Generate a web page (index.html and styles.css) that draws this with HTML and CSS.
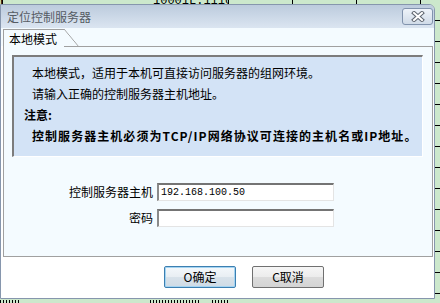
FILE: index.html
```html
<!DOCTYPE html>
<html>
<head>
<meta charset="utf-8">
<link rel="stylesheet" href="styles.css">
</head>
<body>
<div class="desk">
  <div class="toprow">
    <span class="cell c0">Fo</span>
    <span class="cell c1">10001L.1110</span>
    <span class="cell c2"></span>
    <span class="cell c3"></span>
    <span class="cell c4"></span>
  </div>
  <div class="bottomrow">
    <span class="dots d1"></span>
    <span class="dots d2"></span>
    <span class="dots d3"></span>
  </div>

  <div class="dialog">
    <div class="titlebar">
      <span class="title">定位控制服务器</span>
      <button class="close" type="button" aria-label="关闭">
        <svg width="14" height="11" viewBox="0 0 14 11">
          <path d="M3 2 L11 9 M11 2 L3 9" stroke="#5f6670" stroke-width="4" stroke-linecap="square"/>
          <path d="M3 2 L11 9 M11 2 L3 9" stroke="#ffffff" stroke-width="2" stroke-linecap="square"/>
        </svg>
      </button>
    </div>
    <div class="tabstrip">
      <div class="tab">本地模式</div>
    </div>
    <div class="panel">
      <div class="info">
        <p class="line">本地模式，适用于本机可直接访问服务器的组网环境。</p>
        <p class="line">请输入正确的控制服务器主机地址。</p>
        <p class="note">注意:</p>
        <p class="warn">控制服务器主机必须为TCP/IP网络协议可连接的主机名或IP地址。</p>
      </div>
      <div class="form">
        <div class="row">
          <span class="label">控制服务器主机</span>
          <span class="input">192.168.100.50</span>
        </div>
        <div class="row">
          <span class="label">密码</span>
          <span class="input"></span>
        </div>
      </div>
    </div>
    <div class="buttons">
      <button class="btn default" type="button">O确定</button>
      <button class="btn" type="button">C取消</button>
    </div>
  </div>
</div>
</body>
</html>
```

FILE: styles.css
```css
* { box-sizing: border-box; }

html, body {
  margin: 0;
  padding: 0;
}

body {
  width: 440px;
  height: 303px;
  overflow: hidden;
  font-family: "Noto Sans CJK SC", "Liberation Sans", sans-serif;
  font-size: 12px;
  color: #000;
}

.desk {
  position: relative;
  width: 440px;
  height: 303px;
  background-color: #cce8cc;
  background-image: repeating-linear-gradient(to bottom, transparent 0 20px, #000 20px 21px);
  overflow: hidden;
}

.toprow {
  display: flex;
  height: 5px;
  overflow: hidden;
  background: #cce8cc;
}

.cell {
  display: block;
  height: 5px;
  border-right: 1px solid #000;
  font-family: "Liberation Mono", monospace;
  font-size: 12px;
  line-height: 0;
  padding-top: 1px;
  color: #000;
  text-align: center;
  white-space: nowrap;
  overflow: hidden;
}

.c0 { width: 3px; }
.c1 { width: 226px; padding-left: 150px; text-align: left; }
.c2 { width: 64px; }
.c3 { width: 64px; }
.c4 { width: 64px; }

.bottomrow {
  position: absolute;
  left: 0;
  bottom: 0;
  width: 440px;
  height: 4px;
}

.dots {
  position: absolute;
  top: 1px;
  height: 3px;
  background-image: repeating-linear-gradient(to right, #000 0 1px, transparent 1px 3px);
}
.d1 { left: 0; width: 20px; }
.d2 { left: 150px; width: 50px; }
.d3 { left: 212px; width: 18px; }

/* dialog window */
.dialog {
  position: absolute;
  left: 0;
  top: 4px;
  width: 435px;
  height: 295px;
  border: 1px solid #8696ad;
  border-radius: 0 6px 0 0;
  background: #ffffff;
  display: flex;
  flex-direction: column;
  overflow: hidden;
}

.titlebar {
  height: 23px;
  display: flex;
  align-items: center;
  padding-left: 6px;
  padding-right: 1px;
  background: linear-gradient(to bottom, #bccbdd, #dbe5f1);
}

.title {
  color: #555b63;
  font-size: 12px;
  line-height: 14px;
}

.close {
  margin-left: auto;
  width: 31px;
  height: 17px;
  padding: 0;
  border: 1px solid #8193ad;
  border-radius: 3px;
  background: linear-gradient(to bottom, #eef3f9, #d0dbe8);
  display: flex;
  align-items: center;
  justify-content: center;
}

.close svg { display: block; }

.tabstrip {
  height: 18px;
  background: #f4fbff;
  padding-left: 2px;
  display: flex;
  align-items: flex-end;
  position: relative;
  z-index: 1;
}

.tab {
  position: relative;
  width: 61px;
  height: 18px;
  margin-bottom: -1px;
  padding-left: 5px;
  border-top: 1px solid #a0a0a0;
  border-left: 1px solid #a0a0a0;
  background: #f4fbff;
  line-height: 17px;
  font-size: 12px;
}

.tab::after {
  content: "";
  position: absolute;
  left: 60px;
  top: -1px;
  width: 15px;
  height: 18px;
  background: linear-gradient(to top right, transparent calc(50% - 0.7px), #a0a0a0 50%, transparent calc(50% + 0.7px));
}

.panel {
  margin: 0 1px 0 2px;
  height: 211px;
  border: 1px solid #a0a0a0;
  background: #f4fbff;
  padding: 8px 9px 0 8px;
  display: flex;
  flex-direction: column;
}

.info {
  height: 102px;
  border-style: solid;
  border-width: 2px 1px 1px 2px;
  border-color: #7c7c7c #ffffff #ffffff #7c7c7c;
  background: #d3e3f6;
  padding: 5px 0 0 0;
}

.info p {
  margin: 0;
  height: 21px;
  line-height: 21px;
  white-space: nowrap;
}

.line { padding-left: 18px; }

.note {
  padding-left: 10px;
  font-weight: bold;
}

.warn {
  padding-left: 18px;
  font-weight: bold;
  letter-spacing: 1.05px;
  height: 23px;
  line-height: 25px;
}

.form {
  margin-top: 26px;
  display: flex;
  flex-direction: column;
  gap: 8px;
}

.row {
  display: flex;
  align-items: center;
  height: 18px;
}

.label {
  width: 145px;
  text-align: right;
  padding-right: 4px;
  line-height: 18px;
}

.input {
  width: 177px;
  height: 18px;
  border-style: solid;
  border-width: 2px 1px 1px 2px;
  border-color: #747474 #e4e4e4 #e4e4e4 #8a8a8a;
  background: #ffffff;
  padding-left: 2px;
  font-family: "Liberation Mono", monospace;
  font-size: 10px;
  line-height: 15px;
  white-space: nowrap;
}

.buttons {
  display: flex;
  gap: 16px;
  padding-left: 163px;
  margin-top: 9px;
}

.btn {
  width: 72px;
  height: 22px;
  padding: 0;
  border: 1px solid #707070;
  border-radius: 2px;
  background: linear-gradient(to bottom, #f6f6f6 0%, #ececec 50%, #dcdcdc 51%, #d4d4d4 100%);
  font-family: "Noto Sans CJK SC", "Liberation Sans", sans-serif;
  font-size: 12px;
  line-height: 20px;
  color: #000;
}

.btn.default {
  border-color: #3c7fb1;
  box-shadow: inset 0 0 0 1px #a4d4f2;
  background: linear-gradient(to bottom, #f4f8fb 0%, #e8eef3 50%, #d8e2ea 51%, #cfdbe5 100%);
}
```
